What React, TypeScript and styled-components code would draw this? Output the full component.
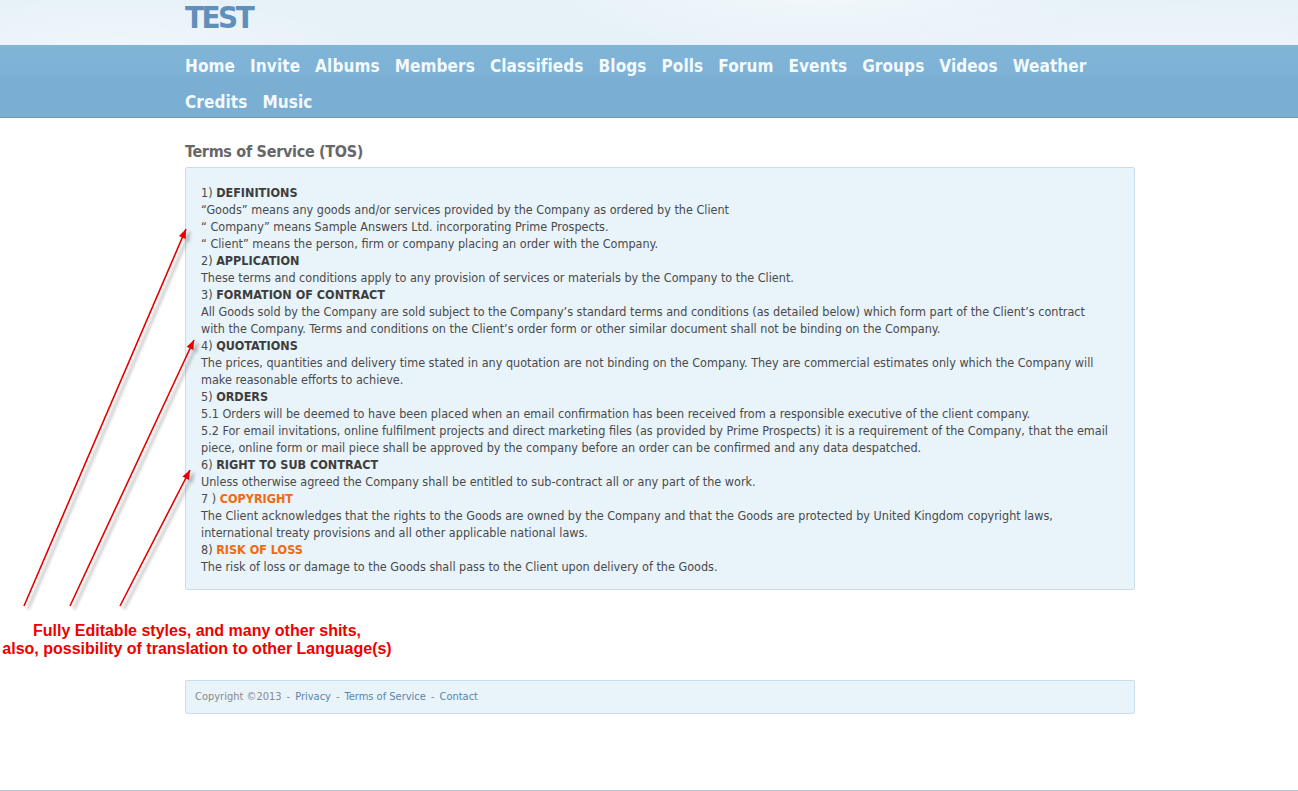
import React, { FC } from "react";
import styled, { createGlobalStyle } from "styled-components";

const GlobalStyle = createGlobalStyle`
  html, body {
    margin: 0;
    padding: 0;
    background: #fff;
  }
  body {
    font-family: "DejaVu Sans Condensed", "DejaVu Sans", sans-serif;
  }
`;

const Page = styled.div`
  position: relative;
  width: 1298px;
  min-height: 790px;
  border-bottom: 1px solid #b9c6d3;
`;

const TopBand = styled.div`
  height: 45px;
  background:
    radial-gradient(ellipse 420px 120px at 820px -20px, rgba(255, 255, 255, 0.55), rgba(255, 255, 255, 0) 70%),
    radial-gradient(ellipse 520px 140px at 1180px 90px, rgba(255, 255, 255, 0.5), rgba(255, 255, 255, 0) 70%),
    radial-gradient(ellipse 380px 100px at 120px 60px, rgba(255, 255, 255, 0.5), rgba(255, 255, 255, 0) 70%),
    #e6f1f8;
`;

const Inner = styled.div`
  width: 950px;
  margin-left: 185px;
`;

const Logo = styled.div`
  font-family: "DejaVu Sans Condensed", "DejaVu Sans", sans-serif;
  font-weight: bold;
  font-size: 31px;
  letter-spacing: -2.5px;
  line-height: 34px;
  color: #5f90bb;
`;

const NavBar = styled.div`
  height: 69px;
  padding-top: 3px;
  background: linear-gradient(#80b5d8 0px, #7db2d6 30px, #7aafd3 34px, #7aafd3 100%);
  border-bottom: 1px solid #7598b0;
`;

const NavList = styled.nav`
  display: flex;
  flex-wrap: wrap;
  column-gap: 15px;
`;

const NavItem = styled.a`
  font-family: "DejaVu Sans Condensed", "DejaVu Sans", sans-serif;
  font-weight: bold;
  font-size: 17px;
  line-height: 36px;
  color: #f4f9fc;
  text-decoration: none;
  letter-spacing: 0.1px;
`;

const Title = styled.h1`
  margin: 24px 0 5px;
  font-family: "DejaVu Sans Condensed", "DejaVu Sans", sans-serif;
  font-weight: bold;
  font-size: 16px;
  line-height: 20px;
  color: #676767;
  letter-spacing: -0.3px;
`;

const Box = styled.div`
  background: #e8f3fa;
  border: 1px solid #cbdde9;
  border-radius: 2px;
  padding: 16px 15px 14px;
`;

const TosBox = styled(Box)`
  font-size: 12.5px;
  line-height: 17px;
  color: #4a4a4a;
  white-space: nowrap;
`;

const Para = styled.div``;

const Head = styled.strong<{ $accent?: boolean }>`
  color: ${(p) => (p.$accent ? "#f26a0e" : "#3d3d3d")};
`;

const Footer = styled(Box)`
  margin-top: 90px;
  padding: 9px 9px 10px;
  font-size: 11px;
  line-height: 13px;
  color: #8a8a8a;
`;

const FootLink = styled.a`
  color: #5a86ad;
  text-decoration: none;
`;

const Sep = styled.span`
  margin: 0 5px;
`;

const Overlay = styled.svg`
  position: absolute;
  left: 0;
  top: 0;
  pointer-events: none;
`;

const Note = styled.div`
  position: absolute;
  left: 0;
  top: 622px;
  width: 394px;
  text-align: center;
  font-family: "Liberation Sans", Arial, sans-serif;
  font-weight: bold;
  font-size: 16px;
  line-height: 18px;
  color: #ee0000;
`;

const navItems = [
  "Home", "Invite", "Albums", "Members", "Classifieds", "Blogs", "Polls",
  "Forum", "Events", "Groups", "Videos", "Weather", "Credits", "Music",
];

const arrows = [
  { x1: 24, y1: 606, x2: 186, y2: 229 },
  { x1: 70, y1: 606, x2: 194, y2: 340 },
  { x1: 120, y1: 606, x2: 190, y2: 470 },
];

const Arrow: FC<{ x1: number; y1: number; x2: number; y2: number }> = ({ x1, y1, x2, y2 }) => {
  const a = Math.atan2(y2 - y1, x2 - x1);
  const len = 10;
  const w = 0.38;
  const p1 = `${x2 - len * Math.cos(a - w)},${y2 - len * Math.sin(a - w)}`;
  const p2 = `${x2 - len * Math.cos(a + w)},${y2 - len * Math.sin(a + w)}`;
  return (
    <g>
      <g opacity={0.35} transform="translate(4 3)" filter="url(#blur)">
        <line x1={x1} y1={y1} x2={x2} y2={y2} stroke="#555" strokeWidth={2.5} />
        <polygon points={`${x2},${y2} ${p1} ${p2}`} fill="#555" />
      </g>
      <line x1={x1} y1={y1} x2={x2} y2={y2} stroke="#e60000" strokeWidth={1.6} />
      <polygon points={`${x2},${y2} ${p1} ${p2}`} fill="#e60000" />
    </g>
  );
};

const App: FC = () => {
  return (
    <>
      <GlobalStyle />
      <Page>
        <TopBand>
          <Inner>
            <Logo>TEST</Logo>
          </Inner>
        </TopBand>
        <NavBar>
          <Inner>
            <NavList>
              {navItems.map((item) => (
                <NavItem href="#" key={item}>{item}</NavItem>
              ))}
            </NavList>
          </Inner>
        </NavBar>
        <Inner>
          <Title>Terms of Service (TOS)</Title>
          <TosBox>
            <Para>1) <Head>DEFINITIONS</Head></Para>
            <Para>“Goods” means any goods and/or services provided by the Company as ordered by the Client</Para>
            <Para>“ Company” means Sample Answers Ltd. incorporating Prime Prospects.</Para>
            <Para>“ Client” means the person, firm or company placing an order with the Company.</Para>
            <Para>2) <Head>APPLICATION</Head></Para>
            <Para>These terms and conditions apply to any provision of services or materials by the Company to the Client.</Para>
            <Para>3) <Head>FORMATION OF CONTRACT</Head></Para>
            <Para>
              All Goods sold by the Company are sold subject to the Company’s standard terms and conditions (as detailed below) which form part of the Client’s contract
              <br />
              with the Company. Terms and conditions on the Client’s order form or other similar document shall not be binding on the Company.
            </Para>
            <Para>4) <Head>QUOTATIONS</Head></Para>
            <Para>
              The prices, quantities and delivery time stated in any quotation are not binding on the Company. They are commercial estimates only which the Company will
              <br />
              make reasonable efforts to achieve.
            </Para>
            <Para>5) <Head>ORDERS</Head></Para>
            <Para>5.1 Orders will be deemed to have been placed when an email confirmation has been received from a responsible executive of the client company.</Para>
            <Para>
              5.2 For email invitations, online fulfilment projects and direct marketing files (as provided by Prime Prospects) it is a requirement of the Company, that the email
              <br />
              piece, online form or mail piece shall be approved by the company before an order can be confirmed and any data despatched.
            </Para>
            <Para>6) <Head>RIGHT TO SUB CONTRACT</Head></Para>
            <Para>Unless otherwise agreed the Company shall be entitled to sub-contract all or any part of the work.</Para>
            <Para>7 ) <Head $accent>COPYRIGHT</Head></Para>
            <Para>
              The Client acknowledges that the rights to the Goods are owned by the Company and that the Goods are protected by United Kingdom copyright laws,
              <br />
              international treaty provisions and all other applicable national laws.
            </Para>
            <Para>8) <Head $accent>RISK OF LOSS</Head></Para>
            <Para>The risk of loss or damage to the Goods shall pass to the Client upon delivery of the Goods.</Para>
          </TosBox>
          <Footer>
            Copyright ©2013<Sep>-</Sep><FootLink href="#">Privacy</FootLink><Sep>-</Sep>
            <FootLink href="#">Terms of Service</FootLink><Sep>-</Sep><FootLink href="#">Contact</FootLink>
          </Footer>
        </Inner>
        <Overlay width={1298} height={791}>
          <defs>
            <filter id="blur" x="-20%" y="-20%" width="140%" height="140%">
              <feGaussianBlur stdDeviation="1.5" />
            </filter>
          </defs>
          {arrows.map((a, i) => (
            <Arrow key={i} {...a} />
          ))}
        </Overlay>
        <Note>
          Fully Editable styles, and many other shits,
          <br />
          also, possibility of translation to other Language(s)
        </Note>
      </Page>
    </>
  );
};

export default App;
